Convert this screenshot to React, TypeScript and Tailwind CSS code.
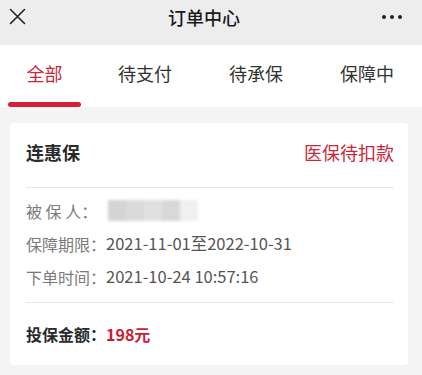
import { memo } from 'react';

const FONT = '"Noto Sans CJK SC", "Noto Sans", "Liberation Sans", sans-serif';

const InfoRow = memo(function InfoRow({ label, children }: { label: string; children: React.ReactNode }) {
  return (
    <div className="flex h-[33px] items-center text-[16px]">
      <span className="w-[80px] shrink-0 text-[#7a7a7a]">{label}</span>
      <span className="text-[16.5px] text-[#555]">{children}</span>
    </div>
  );
});

export default function App() {
  return (
    <div className="w-[422px] h-[375px] bg-[#f4f4f4] overflow-hidden" style={{ fontFamily: FONT }}>
      {/* Top bar */}
      <div className="h-[45px] bg-[#ededed]">
        <div className="flex h-[33px] items-center justify-between pl-[9px] pr-[20px]">
          <svg width="17" height="17" viewBox="0 0 17 17" fill="none">
            <path d="M1.5 1.5 15.5 15.5M15.5 1.5 1.5 15.5" stroke="#222" strokeWidth="1.6" strokeLinecap="round" />
          </svg>
          <span className="text-[18px] font-medium text-[#1a1a1a] leading-none">订单中心</span>
          <div className="flex gap-[4px]">
            <span className="w-[4px] h-[4px] rounded-full bg-[#222]" />
            <span className="w-[4px] h-[4px] rounded-full bg-[#222]" />
            <span className="w-[4px] h-[4px] rounded-full bg-[#222]" />
          </div>
        </div>
      </div>

      {/* Tabs */}
      <div className="h-[62px] bg-white flex flex-col">
        <div className="flex flex-1 items-center pl-[8px] text-[18px] text-[#333]">
          <span className="w-[73px] text-center text-[#c8283c]">全部</span>
          <span className="ml-[37px] w-[54px] text-center">待支付</span>
          <span className="ml-[57px] w-[54px] text-center">待承保</span>
          <span className="ml-[57px] w-[54px] text-center">保障中</span>
        </div>
        <div className="ml-[8px] w-[73px] h-[5px] rounded-full bg-[#d3213a]" />
      </div>

      {/* Order card */}
      <div className="ml-[10px] mt-[16px] w-[398px] h-[242px] bg-white rounded-[4px] pl-[16px] pr-[14px]">
        <div className="flex h-[58px] items-center justify-between">
          <span className="text-[18px] font-bold text-[#2a2a2a]">连惠保</span>
          <span className="text-[18px] text-[#c8283c]">医保待扣款</span>
        </div>
        <div className="mt-[6px] h-px bg-[#e6e6e6]" />
        <div className="pt-[6px]">
          <InfoRow label="被 保 人：">
            <span className="flex h-[21px] w-[90px] ml-[2px] blur-[1.5px]">
              <span className="flex-1 bg-[#d4d4d4]" />
              <span className="flex-1 bg-[#dadada]" />
              <span className="flex-1 bg-[#e0e0e0]" />
              <span className="flex-1 bg-[#d8d8d8]" />
              <span className="flex-1 bg-[#f0f0f0]" />
            </span>
          </InfoRow>
          <InfoRow label="保障期限：">2021-11-01至2022-10-31</InfoRow>
          <InfoRow label="下单时间：">2021-10-24 10:57:16</InfoRow>
        </div>
        <div className="mt-[9px] h-px bg-[#e6e6e6]" />
        <div className="flex h-[62px] items-center text-[16px] font-bold">
          <span className="text-[#2a2a2a]">投保金额：</span>
          <span className="text-[#c81e32]">198元</span>
        </div>
      </div>
    </div>
  );
}
